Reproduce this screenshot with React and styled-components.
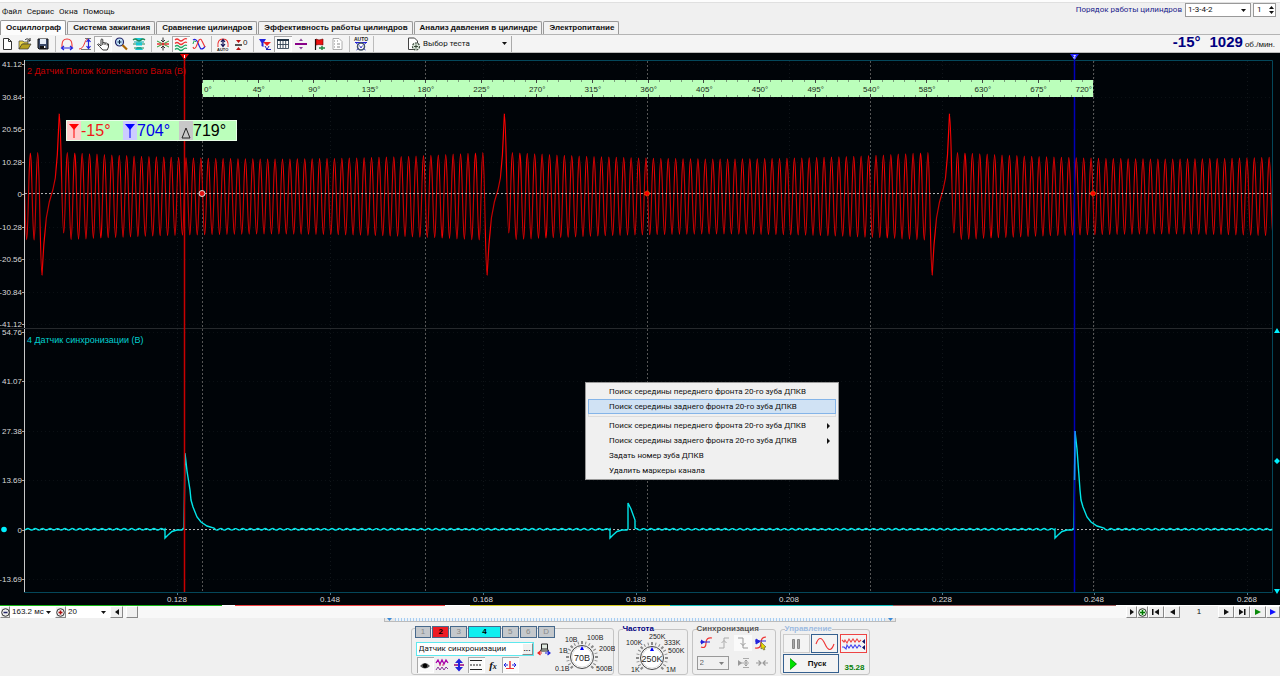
import React, { useState } from 'react';
import styled, { createGlobalStyle } from 'styled-components';

const tabs = [
    'Осциллограф',
    'Система зажигания',
    'Сравнение цилиндров',
    'Эффективность работы цилиндров',
    'Анализ давления в цилиндре',
    'Электропитание',
];

const menuItems = [
    { text: 'Поиск середины переднего фронта 20-го зуба ДПКВ' },
    { text: 'Поиск середины заднего фронта 20-го зуба ДПКВ', active: true, last: true },
    { text: 'Поиск середины переднего фронта 20-го зуба ДПКВ', sub: true },
    { text: 'Поиск середины заднего фронта 20-го зуба ДПКВ', sub: true },
    { text: 'Задать номер зуба ДПКВ' },
    { text: 'Удалить маркеры канала' },
];

const uiFont = "Roboto, 'Liberation Sans', sans-serif";

const GlobalStyle = createGlobalStyle`
* { box-sizing: border-box; }
body {
    margin: 0;
    background: #f0f0f0;
    color: #111;
    font-family: 'Liberation Sans', Arial, sans-serif;
    font-size: 8px;
    line-height: 10px;
}
button, input, select {
    font: inherit;
    color: inherit;
    margin: 0;
    padding: 0;
    border: 0;
    background: none;
    border-radius: 0;
}
svg { display: block; flex: none; }
`;

/* ---------- icons ---------- */

const Icon = ({ w = 16, h = 16, children }) => (
    <svg width={w} height={h} viewBox={`0 0 ${w} ${h}`} fill="none" aria-hidden="true">
        {children}
    </svg>
);

const ArrowDown = () => <Icon w={5} h={3}><path d="M0 0h5L2.5 3z" fill="#111" /></Icon>;
const ArrowTiny = () => <Icon w={5} h={3}><path d="M0 0h5L2.5 3z" fill="#3a8ad8" /></Icon>;

const toolGroups = [
    [
        { name: 'Новый', icon: <path d="M4.5 2.500h5l3 3v8h-8zM9.500 2.500v3h3" stroke="#333" fill="#fff" /> },
        { name: 'Открыть', icon: <>
            <path d="M2 13V5h4l1 1h4v2H6z" fill="#e8d44a" stroke="#444" strokeWidth=".7" />
            <path d="M2 13l3-5h9l-3 5z" fill="#b5a020" stroke="#333" strokeWidth=".7" />
            <path d="M8 4c2-2 4-1 5 1m0-3v3h-3" stroke="#222" />
        </> },
        { name: 'Сохранить', icon: <>
            <path d="M3 3h10v10H4l-1-1z" fill="#3a4a6a" stroke="#111" />
            <path d="M5 3h6v5H5z" fill="#e4ecf6" /><path d="M5 10h6v3H5z" fill="#111" /><path d="M9 10h1.5v2H9z" fill="#fff" />
        </> },
    ],
    [
        { name: 'Период', icon: <>
            <path d="M3 11V9q0-6 5-6t5 6v2" stroke="#e33" strokeWidth="1.1" />
            <path d="M3 12h10M5 10l-2.500 2L5 14M11 10l2.500 2L11 14" stroke="#22d" strokeWidth="1.2" />
        </> },
        { name: 'Амплитуда', icon: <>
            <path d="M2 13c6 0 5-10 9-10" stroke="#e33" /><path d="M4 13.500h10M8 2.500h6" stroke="#555" strokeWidth=".8" />
            <path d="M11.500 4v8M9.500 6l2-2.500 2 2.500M9.500 10l2 2.500 2-2.500" stroke="#22d" strokeWidth="1.2" />
        </> },
        { name: 'Рука', pressed: true, icon: <path d="M6 10V3.500q1-1.200 1.800 0V7l1.200-.6 1 .8 1.400-.4.8 1 1.300.2V11l-1.300 3H7.800L4.500 10.500 2.500 8.500q.5-1 1.600-.3zM7.800 7v2M10 7.200V9M12.200 8v1.500" fill="#fff" stroke="#222" strokeWidth=".9" /> },
        { name: 'Масштаб', icon: <>
            <circle cx="6.500" cy="6" r="4" fill="#bfe3fa" stroke="#226" strokeWidth="1.2" /><path d="M4.500 6h4M6.500 4v4" stroke="#124" />
            <path d="M9.500 9l4.500 4.500" stroke="#a60" strokeWidth="2.2" />
        </> },
        { name: 'Авто масштаб', icon: <>
            <path d="M4 2h8l-2 3H6zM4 14h8l-2-3H6z" fill="#16c8d4" /><path d="M5 6.500h6v3H5z" fill="#16c8d4" />
            <path d="M2 4q2-2 4 0t4 0 4 0M2 8h3m6 0h3M3 12h10" stroke="#285" strokeWidth="1.2" /><path d="M3 6h10" stroke="#0aa" />
        </> },
    ],
    [
        { name: 'Совместить', icon: <>
            <path d="M2 8h4m4 0h4" stroke="#e33" strokeWidth="1.5" /><path d="M2 5l6 3-6 3M14 5L8 8l6 3" stroke="#393" />
            <path d="M8 1.500v4M8 14.500v-4M6 4l2 2 2-2M6 12l2-2 2 2" stroke="#333" /><circle cx="8" cy="8" r="1.5" fill="#d33" />
        </> },
        { name: 'Раздельно', pressed: true, icon: <>
            <path d="M2 4q2-2 4 0t4 0 4-1M2 7.500q2-2 4 0t4 0 4-1" stroke="#e33" strokeWidth="1.2" />
            <path d="M2 10.500q2-2 4 0t4 0 4-1M2 13.500q2-2 4 0t4 0 4-1" stroke="#2a6" strokeWidth="1.2" />
        </> },
        { name: 'Наложить', icon: <>
            <path d="M2 4q3-2 5 3t3 6q3 0 4-3" stroke="#22d" strokeWidth="1.2" /><path d="M2 11q1 3 3 0l3-7q2-2 3 1l3 6" stroke="#e33" strokeWidth="1.1" /><path d="M2 8q1-5 3-2" stroke="#2a5" />
        </> },
    ],
    [
        { name: 'Авто', icon: <>
            <path d="M3 11q-1-8 5-8t5 8" stroke="#e33" strokeWidth="1.1" /><path d="M8 4v6M6 6l2-2.500L10 6M6 8l2 2.500L10 8" stroke="#115" strokeWidth="1.2" />
            <text x="2" y="15" fontSize="4" fontWeight="bold" fill="#222">AUTO</text>
        </> },
        { name: 'Ноль', icon: <>
            <path d="M2 9h7" stroke="#222" strokeWidth="1.5" /><path d="M3 4h5L5.500 7zM3 14h5l-2.500-3z" fill="#b11" />
            <text x="10" y="9" fontSize="8" fill="#222">0</text>
        </> },
    ],
    [
        { name: 'Фильтр', icon: <>
            <path d="M2 3h7L6.500 7v4L4.500 10V7z" fill="#22d" /><path d="M6 6h8l-4 4z" fill="#e22" /><path d="M8 10l2 3.500L12 10M9 13.500h5" stroke="#22b" />
        </> },
        { name: 'Таблица', pressed: true, icon: <>
            <path d="M2.500 3.500h11v9h-11zM5.300 5v7M8 5v7M10.700 5v7M2.500 8.500h11" stroke="#345" fill="#fff" strokeWidth=".9" /><path d="M2 3h12v2H2z" fill="#234" />
        </> },
        { name: 'Разделить', icon: <><path d="M2 8h12" stroke="#808" strokeWidth="2" /><path d="M6 5h4L8 2.500zM6 11h4l-2 2.500z" fill="#849" /></> },
        { name: 'Флаг', icon: <>
            <path d="M4.500 3v11" stroke="#111" strokeWidth="1.2" /><path d="M5 3l3 1 4-1v6l-4-.5L5 9z" fill="#e11" stroke="#600" strokeWidth=".6" /><path d="M8 12h6M11 10v4" stroke="#284" strokeWidth="1.5" />
        </> },
        { name: 'Отчёт', icon: <>
            <path d="M4 2.500h6l3 3v8H4z" fill="#fff" stroke="#999" strokeWidth=".8" /><path d="M5 5h1m-1 3h1m-1 3h1m2-3h3m-3 3h3m-3-6h1" stroke="#888" />
        </> },
    ],
    [
        { name: 'Автонастройка', icon: <>
            <text x="1" y="5" fontSize="5" fontWeight="bold" fill="#222">AUTO</text><path d="M2 6.500h12" stroke="#22d" />
            <circle cx="8" cy="10.500" r="3.500" stroke="#456" strokeWidth="1.5" fill="#fff" /><path d="M6.500 9.500L8 12l1.500-2.500M3 7l2 1.500M13 7l-2 1.500M3.500 14l2-1.500M12.500 14l-2-1.500" stroke="#22b" strokeWidth=".9" />
        </> },
    ],
];

/* ---------- scope geometry ---------- */

const REV = 445.1;
const peaks = [-385.8, 59.3, 504.4, 949.5];
const LEFT = 25;
const RIGHT = 1272;

// crank sensor, 58 teeth and a gap in each revolution
const crankPath = () => {
    const pts = [];
    peaks.forEach((p) => {
        pts.push([p, 114, 1]);
        for (let k = 1; k <= 57; k++) {
            const e = ((k - 29) / 28) ** 2;
            const x = p + 8 + (k - 1) * 7.42;
            pts.push([x - 3.6, k === 1 ? 233 : 234 + 6 * e]);
            pts.push([x, 159 - 6.5 * e]);
        }
        const t = p + REV;
        pts.push([t - 17.3, 275]);
        pts.push([t - 15.5, 245, 1], [t - 13, 218, 1], [t - 10, 202, 1], [t - 6.5, 190, 1], [t - 4, 178, 1], [t - 2, 155, 1]);
    });
    return pts.map(([x, y, line], i) => {
        if (i === 0) return `M${x} ${y}`;
        if (line) return `L${x} ${y}`;
        const [x0, y0] = pts[i - 1];
        const c = (x - x0) * 0.4;
        return `C${(x0 + c).toFixed(2)} ${y0} ${(x - c).toFixed(2)} ${y.toFixed(1)} ${x.toFixed(2)} ${y.toFixed(1)}`;
    }).join('');
};

const spike = (x, top) => [
    [x - 1, 529], [x, top], [x + 2, top + 18], [x + 5, 490], [x + 6, 500], [x + 8, 507],
    [x + 12, 517], [x + 16, 522], [x + 22, 526], [x + 29, 528],
];
const dip = (x) => [[x, 529], [x, 538], [x + 3, 535], [x + 7, 531.5], [x + 12, 530], [x + 17, 530]];

const syncPath = () => {
    const events = [
        dip(165), spike(185, 453),
        dip(610), [[628, 529], [628, 503], [631, 509], [635, 520], [635, 528]],
        dip(1055), spike(1075, 431),
    ];
    const pts = [];
    let x = LEFT;
    events.concat([[[RIGHT, 529]]]).forEach((ev) => {
        for (; x < ev[0][0]; x += 1) pts.push([x, 529.3 + 0.8 * Math.sin(x * 0.847)]);
        pts.push(...ev);
        x = ev[ev.length - 1][0] + 1;
    });
    return 'M' + pts.map(([a, b]) => `${a} ${b.toFixed(1)}`).join('L');
};

const topScale = ['41.12', '30.84', '20.56', '10.28', '0', '-10.28', '-20.56', '-30.84', '-41.12'];
const bottomScale = ['54.76', '41.07', '27.38', '13.69', '0', '-13.69'];
const times = ['0.128', '0.148', '0.168', '0.188', '0.208', '0.228', '0.248', '0.268'];
const range = (n) => Array.from({ length: n }, (_, i) => i);

const topY = (i) => Math.round(64 + i * 32.5);
const bottomY = (i) => Math.round(332 + i * 49.4);
const timeX = (i) => Math.round(177 + i * 152.9);

function Scale({ labels, at }) {
    return labels.map((t, i) => (
        <g key={t}>
            <text x="22" y={at(i) + 3} textAnchor="end" fill="#d8d8d8">{t}</text>
            <path d={`M22 ${at(i)}.5h3`} stroke="#aaa" />
            <path d={`M25 ${at(i)}.5H1272`} stroke="#0b1014" strokeDasharray="1 3" />
        </g>
    ));
}

function DegreeRuler() {
    return (
        <g fill="#1a2a1a">
            <rect x="202" y="80" width="891" height="17" fill="#bbffbb" />
            {range(81).map((i) => {
                const x = Math.round(202 + i * 11.14);
                const h = i % 5 === 0 ? 3 : 2;
                return <path key={i} d={`M${x}.5 80v${h}M${x}.5 97v-${h}`} stroke={i % 5 === 0 ? '#444' : '#7a9a7a'} />;
            })}
            <text x="204" y="92">0°</text>
            {range(15).map((i) => <text key={i} x={203 + (i + 1) * 55.7} y="92" textAnchor="middle">{(i + 1) * 45}°</text>)}
            <text x="1092" y="92" textAnchor="end">720°</text>
        </g>
    );
}

function Scope() {
    return (
        <ScopeSvg viewBox="0 53 1280 552" role="img" aria-label="Осциллограмма">
            <defs>
                <linearGradient id="crank" gradientUnits="userSpaceOnUse" x1="0" x2="0" y1="110" y2="276">
                    <stop offset="0" stopColor="#f00" />
                    <stop offset=".34" stopColor="#f00" />
                    <stop offset=".45" stopColor="#c40000" />
                    <stop offset=".65" stopColor="#c40000" />
                    <stop offset=".75" stopColor="#f00" />
                    <stop offset="1" stopColor="#e00000" />
                </linearGradient>
                <clipPath id="plot"><rect x={LEFT} y="60" width={RIGHT - LEFT} height="532" /></clipPath>
            </defs>
            <rect y="53" width="1280" height="552" fill="#000408" />

            <Scale labels={topScale} at={topY} />
            <Scale labels={bottomScale} at={bottomY} />
            {times.map((t, i) => (
                <g key={t}>
                    <path d={`M${timeX(i)}.5 61V592`} stroke="#11161a" strokeDasharray="1 3" />
                    <text x={timeX(i)} y="602" textAnchor="middle" fill="#d8d8d8">{t}</text>
                    <path d={`M${timeX(i)}.5 592v3`} stroke="#578" />
                </g>
            ))}

            <path d="M24 60.500H1272.500V592.500H24" fill="none" stroke="#04475a" />
            <path d="M24.500 60V592" stroke="#c8c8c8" />
            <path d="M0 328.500H1272" stroke="#26292c" />
            {range(5).map((i) => <path key={i} d={`M${Math.round(202 + i * 222.7)}.5 61V592`} stroke="#555" strokeDasharray="2 2" />)}

            <g clipPath="url(#plot)" fill="none">
                <path d={crankPath()} stroke="url(#crank)" strokeWidth="1.2" />
            </g>
            <path d="M25 193.500H1272M25 529.500H1272" stroke="#ddd" strokeDasharray="2 2" opacity=".8" />
            <path d={syncPath()} stroke="#00e5e8" strokeWidth="1.4" fill="none" />

            <path d="M184.500 58V592" stroke="#c80000" strokeWidth="1.5" />
            <path d="M180 54h9l-4.500 6z" fill="#e00000" /><path d="M184.500 55v3" stroke="#fff" />
            <path d="M1074.500 58V592" stroke="#0000b8" strokeWidth="1.5" />
            <path d="M1070 54h9l-4.500 6z" fill="#2020ff" /><path d="M1073.500 55.500h2l-2 2.500h2" stroke="#fff" strokeWidth=".8" fill="none" />
            <path d="M1074.500 480L1075 431" stroke="#1a8cff" strokeWidth="1.5" />
            <DegreeRuler />

            <circle cx="202" cy="193.500" r="3" fill="#e01010" stroke="#ddd" />
            {[647, 1093].map((x) => <circle key={x} cx={x} cy="193.500" r="2.5" fill="#f00" stroke="#c80" strokeDasharray="1 1" />)}

            <text x="27" y="74" fontSize="9" fill="#c40000">2 Датчик Полож Коленчатого Вала (В)</text>
            <text x="27" y="343" fontSize="9" fill="#00d0d0">4 Датчик синхронизации (В)</text>

            <g fill="#00f0ff">
                <circle cx="4" cy="529.500" r="2.8" />
                <path d="M1274 333h6l-3-5zM1274 589h6l-3 5zM1277 458l3 3-3 3-3-3z" />
            </g>
        </ScopeSvg>
    );
}

/* ---------- dials ---------- */

function Dial({ w, cx, value, labels }) {
    return (
        <DialSvg width={w} height="41" viewBox={`0 1 ${w} 41`} role="img" aria-label={value}>
            {range(19).map((i) => (
                <path key={i} d={`M${cx} 10v3`} stroke="#888" strokeWidth={i % 3 ? 1 : 2} transform={`rotate(${-135 + i * 15} ${cx} 26)`} />
            ))}
            <circle cx={cx} cy="26" r="11.5" fill="#fafafa" stroke="#444" />
            <circle cx={cx} cy="26" r="10" fill="#fff" stroke="#ccc" strokeWidth=".6" />
            <path d={`M${cx - 2} 19h4l-2-4z`} fill="#00f" />
            <text x={cx} y="30" textAnchor="middle" fontSize="9">{value}</text>
            {labels.map(([t, x, y]) => <text key={t} x={x} y={y} fontSize="7">{t}</text>)}
        </DialSvg>
    );
}

const channels = ['1', '2', '3', '4', '5', '6', 'D'];

export default function App() {
    const [tab, setTab] = useState(0);
    const [channel, setChannel] = useState('Датчик синхронизации');

    return (
        <Page>
            <GlobalStyle />
            <TitleStrip />
            <MenuRow>
                <nav>
                    {['Файл', 'Сервис', 'Окна', 'Помощь'].map((m) => <button key={m}>{m}</button>)}
                </nav>
                <OrderBox>
                    <label htmlFor="order">Порядок работы цилиндров</label>
                    <SelectBox $w={66} $border>
                        <select id="order"><option>1-3-4-2</option><option>1-2-4-3</option></select>
                        <ArrowDown />
                    </SelectBox>
                    <Spin>
                        <input type="number" aria-label="Цилиндр" defaultValue="1" />
                        <Icon w={5} h={10}><path d="M0 4h5L2.5 1zM0 6h5L2.5 9z" fill="#111" /></Icon>
                    </Spin>
                </OrderBox>
            </MenuRow>

            <Tabs role="tablist">
                {tabs.map((t, i) => (
                    <Tab key={t} role="tab" aria-selected={i === tab} $active={i === tab} onClick={() => setTab(i)}>{t}</Tab>
                ))}
            </Tabs>

            <Toolbar>
                {toolGroups.map((group, i) => (
                    <ToolGroup key={i}>
                        {group.map((b) => (
                            <ToolButton key={b.name} aria-label={b.name} $pressed={b.pressed}><Icon>{b.icon}</Icon></ToolButton>
                        ))}
                    </ToolGroup>
                ))}
                <TestButton>
                    <Icon w={14} h={14}>
                        <path d="M1.500 1h6l3 3v8.500h-9z" fill="#fff" stroke="#444" />
                        <circle cx="9" cy="9.500" r="3.5" fill="#dfeadf" stroke="#374737" strokeWidth="1.2" strokeDasharray="2 1" /><path d="M7 9.500h4M9 7.500v4" stroke="#374737" />
                    </Icon>
                    <span>Выбор теста</span>
                    <ArrowDown />
                </TestButton>
                <Rpm><b>-15°</b><b>1029</b><span>об./мин.</span></Rpm>
            </Toolbar>

            <ScopeBox>
                <Scope />
                <Readout>
                    <ReadIcon $bg="#ffcccc"><Icon w={14} h={18}><path d="M2 2h10L7 8z" fill="#f00" /><path d="M7 7v9" stroke="#f00" /></Icon></ReadIcon>
                    <ReadValue $color="#f01818">-15°</ReadValue>
                    <ReadIcon $bg="#ccccff"><Icon w={14} h={18}><path d="M2 2h10L7 8z" fill="#00f" /><path d="M7 7v9" stroke="#00f" /></Icon></ReadIcon>
                    <ReadValue $color="#0000e8">704°</ReadValue>
                    <ReadIcon $bg="#c8c8c8"><Icon w={14} h={18}><path d="M3 16L7 6l4 10z" stroke="#222" /></Icon></ReadIcon>
                    <ReadValue $color="#000">719°</ReadValue>
                </Readout>
                <ContextMenu role="menu">
                    {menuItems.map((m, i) => (
                        <ContextItem key={i} role="menuitem" $active={m.active} $last={m.last}>
                            {m.text}
                            {m.sub && <Icon w={3} h={6}><path d="M0 0v6l3-3z" fill="#111" /></Icon>}
                        </ContextItem>
                    ))}
                </ContextMenu>
            </ScopeBox>

            <ChannelLine>
                <Stretch $color="#14b414" $w={222} /><Stretch $color="#fff" $w={13} /><Stretch $color="#f04040" $w={210} /><Stretch $color="#fff" $w={25} />
                <Stretch $color="#d8cc20" $w={200} /><Stretch $color="#10c0c0" $w={223} /><Stretch $color="#a06060" $w={223} /><Stretch $color="#fff" $w={164} />
            </ChannelLine>
            <ScrollRow>
                <FlatButton $w={10} aria-label="Уменьшить"><Icon w={9} h={9}><circle cx="4.500" cy="4.500" r="3.800" stroke="#333" /><path d="M2.500 4.500h4" stroke="#226" strokeWidth="1.5" /></Icon></FlatButton>
                <SelectBox $w={45}><select aria-label="Развёртка"><option>163.2 мс</option></select><ArrowDown /></SelectBox>
                <FlatButton $w={11} aria-label="Увеличить"><Icon w={9} h={9}><circle cx="4.500" cy="4.500" r="3.800" stroke="#333" /><path d="M2.500 4.500h4M4.500 2.500v4" stroke="#a11" strokeWidth="1.5" /></Icon></FlatButton>
                <SelectBox $w={44}><select aria-label="Шаг"><option>20</option></select><ArrowDown /></SelectBox>
                <FlatButton $w={13} aria-label="Влево"><Icon w={4} h={6}><path d="M4 0v6L0 3z" fill="#111" /></Icon></FlatButton>
                <Track><Thumb aria-label="Ползунок" /></Track>
                <FlatButton $w={11} aria-label="Вправо"><Icon w={4} h={6}><path d="M0 0v6l4-3z" fill="#111" /></Icon></FlatButton>
                <FlatButton $w={11} aria-label="Добавить кадр"><Icon w={9} h={9}><circle cx="4.500" cy="4.500" r="3.800" stroke="#333" fill="#dfd" /><path d="M2 4.500h5M4.500 2v5" stroke="#070" strokeWidth="1.5" /></Icon></FlatButton>
                <FlatButton $w={16} aria-label="В начало"><Icon w={8} h={6}><path d="M0 0h1.500v6H0zM7 0v6L2.500 3z" fill="#111" /></Icon></FlatButton>
                <FlatButton $w={16} aria-label="Назад"><Icon w={5} h={6}><path d="M5 0v6L0 3z" fill="#111" /></Icon></FlatButton>
                <Frame>1</Frame>
                <FlatButton $w={16} aria-label="Вперёд"><Icon w={5} h={6}><path d="M0 0v6l5-3z" fill="#111" /></Icon></FlatButton>
                <FlatButton $w={16} aria-label="В конец"><Icon w={8} h={6}><path d="M1 0v6l4.500-3zM6 0h1.500v6H6z" fill="#111" /></Icon></FlatButton>
                <FlatButton $w={16} aria-label="Воспроизвести"><Icon w={6} h={6}><path d="M0 0v6l6-3z" fill="#0a8a0a" /></Icon></FlatButton>
                <FlatButton $w={14} aria-label="Далее"><Icon w={6} h={6}><path d="M0 0v6l6-3z" fill="#11f" /></Icon></FlatButton>
            </ScrollRow>
            <Splitter><ArrowTiny /><Dots /><ArrowTiny /></Splitter>

            <Bottom>
                <ChannelGroup>
                    <ChannelLeft>
                        <Channels>
                            {channels.map((c) => <ChannelButton key={c} $c={c}>{c}</ChannelButton>)}
                        </Channels>
                        <NameRow>
                            <NameField>
                                <input aria-label="Канал" value={channel} onChange={(e) => setChannel(e.target.value)} />
                                <button aria-label="Выбрать">...</button>
                            </NameField>
                            <Icon w={14} h={13}>
                                <path d="M4.500 1h6v5h-6zM4.500 6l-1 2h8l-1-2" stroke="#222" fill="#dfe8df" />
                                <path d="M3.500 8L1 10l2.500 2M1 10h4" stroke="#e22" strokeWidth="1.2" /><path d="M10.500 8l2.500 2-2.500 2M13 10H8" stroke="#22d" strokeWidth="1.2" />
                            </Icon>
                        </NameRow>
                        <IconRow>
                            <ToolButton aria-label="Показать" $pressed><Icon><path d="M3 9q5-6 10 0-5 5-10 0z" fill="#555" /><circle cx="8" cy="8.800" r="2.2" fill="#000" /></Icon></ToolButton>
                            <ToolButton aria-label="Инверсия"><Icon><path d="M2 6l2-3 2 4 2-4 2 4 2-4 2 3" stroke="#a0a" strokeWidth="1.3" /><path d="M2 13l2-3 2 3 2-3 2 3 2-3 2 2" stroke="#839" /><path d="M5 8h6" stroke="#c36" strokeDasharray="2 1" /></Icon></ToolButton>
                            <ToolButton aria-label="Смещение"><Icon><path d="M8 1.500l4 4.500H4zM8 14.500l4-4.500H4z" fill="#22d" /><path d="M3 8h10" stroke="#907" strokeWidth="1.5" /><path d="M8 5v6" stroke="#22d" strokeWidth="2" /></Icon></ToolButton>
                            <ToolButton aria-label="Линии" $pressed><Icon><path d="M2 3.500h12M2 12.500h12" stroke="#222" /><path d="M2 8h12" stroke="#222" strokeDasharray="2 1" /></Icon></ToolButton>
                            <ToolButton aria-label="Формула"><em>f<small>x</small></em></ToolButton>
                            <ToolButton aria-label="Порог" $pressed><Icon><path d="M2 8h4M4 6L2 8l2 2M14 8h-4M12 6l2 2-2 2" stroke="#22d" /><path d="M4 11.500h4V4v7.500h4" stroke="#e33" /></Icon></ToolButton>
                        </IconRow>
                    </ChannelLeft>
                    <Dial w={60} cx={27} value="70В" labels={[['0.1В', 0, 40], ['1В', 4, 22], ['10В', 10, 11], ['100В', 32, 9], ['200В', 44, 20], ['500В', 41, 40]]} />
                </ChannelGroup>

                <Group $w={70}>
                    <legend>Частота</legend>
                    <Dial w={64} cx={31} value="250K" labels={[['1K', 10, 40], ['100K', 5, 13], ['250K', 28, 7], ['333K', 43, 13], ['500K', 47, 21], ['1M', 45, 40]]} />
                </Group>

                <Group $w={84} $color="#555">
                    <legend>Синхронизация</legend>
                    <SyncGrid>
                        <ToolButton aria-label="Порог синхронизации"><Icon><path d="M3 12q5 2 5-4t6-5" stroke="#e33" strokeWidth="1.2" /><path d="M2 7h10" stroke="#22d" /><path d="M3 4.500v5L7 7z" fill="#22d" /></Icon></ToolButton>
                        <ToolButton aria-label="Фронт"><Icon><path d="M3 13h5V3h5M5.500 8L8 5.500 10.500 8" stroke="#aaa" /></Icon></ToolButton>
                        <ToolButton aria-label="Спад" $light><Icon><path d="M3 3h5v10h5M5.500 8L8 10.500 10.500 8" stroke="#999" /></Icon></ToolButton>
                        <ToolButton aria-label="Авто"><Icon><path d="M2 13q6 1 6-5t5-6" stroke="#e33" strokeWidth="1.2" /><path d="M2 6h11M3 4v5l4-2.500z" stroke="#22d" fill="#22d" /><path d="M8 7l5 5-2 .5 1 2-1.500.5-1-2L8 14z" fill="#e8d800" stroke="#553" strokeWidth=".6" /></Icon></ToolButton>
                    </SyncGrid>
                    <SyncGrid>
                        <SelectBox $w={32} $border $dim><select aria-label="Канал синхронизации"><option>2</option></select><ArrowDown /></SelectBox>
                        <SyncPair>
                            <ToolButton aria-label="Смещение"><Icon><path d="M7 3.500h6M7 12.500h6M3 8h10" stroke="#aaa" strokeWidth="1.2" /><path d="M2 5v6l4-3z" fill="#999" /><path d="M10 5v6M8.500 6.500L10 5l1.500 1.500M8.500 9.500L10 11l1.500-1.500" stroke="#999" /></Icon></ToolButton>
                            <ToolButton aria-label="Сжать"><Icon><path d="M2 8h5M14 8H9M4.500 5.500L7 8l-2.500 2.500M11.500 5.500L9 8l2.500 2.500" stroke="#999" strokeWidth="1.2" /></Icon></ToolButton>
                        </SyncPair>
                    </SyncGrid>
                </Group>

                <Group $w={90} $color="#9dbbe0">
                    <legend>Управление</legend>
                    <ControlRow>
                        <ControlButton aria-label="Пауза" $border="#ccc"><Icon w={10} h={12}><path d="M1.500 1.500h2v9h-2zM6.500 1.500h2v9h-2z" fill="#aaa" stroke="#888" /></Icon></ControlButton>
                        <ControlButton aria-label="Синус" $border="#35608f"><Icon w={20} h={14}><path d="M1 7Q5-4 10 7T19 7" stroke="#e33" strokeWidth="1.1" /></Icon></ControlButton>
                        <ControlButton aria-label="Поток" $border="#e44"><Icon w={25} h={14}>
                            <path d="M1 3l2 2 1-2 2 3 2-4 2 3 2-3 2 3 2-3 2 3 2-2" stroke="#e44" strokeWidth="1.1" /><path d="M1 10h2l2 2 1-4 2 3 2-3 2 3 2-3 2 3 2-3 2 2" stroke="#44e" strokeWidth="1.1" />
                            <path d="M24 2v5l-3-2.500zM24 8v5l-3-2.500z" fill="#116" />
                        </Icon></ControlButton>
                    </ControlRow>
                    <ControlRow>
                        <StartButton><Icon w={7} h={12}><path d="M0 0v12l7-6z" fill="#0a8a0a" /><path d="M0 1v10l6-5z" fill="#00e000" /></Icon><span>Пуск</span></StartButton>
                        <Elapsed>35.28</Elapsed>
                    </ControlRow>
                </Group>
            </Bottom>
        </Page>
    );
}

/* ---------- styles ---------- */

const Page = styled.div`
display: flex;
flex-direction: column;
min-height: 100vh;
`;

const TitleStrip = styled.div`
height: 3px;
background: #fdfdfd;
border-bottom: 1px solid #e0e0e0;
`;

const MenuRow = styled.div`
display: flex;
justify-content: space-between;
align-items: flex-start;
height: 17px;
font-family: ${uiFont};
nav {
    display: flex;
    gap: 5px;
    padding: 4px 2px;
}
`;

const OrderBox = styled.div`
display: flex;
align-items: center;
gap: 2px;
padding-right: 4px;
label {
    color: #1c1c8c;
    padding-right: 1px;
}
`;

const SelectBox = styled.div`
display: grid;
align-items: center;
width: ${(p) => p.$w}px;
height: ${(p) => (p.$border ? 14 : 12)}px;
background: ${(p) => (p.$dim ? '#f0f0f0' : '#fff')};
border: ${(p) => (p.$border ? '1px solid #999' : '0')};
color: ${(p) => (p.$dim ? '#666' : '#111')};
select {
    grid-area: 1 / 1;
    appearance: none;
    width: 100%;
    height: 100%;
    padding-left: 2px;
    line-height: 10px;
    outline: 0;
}
svg {
    grid-area: 1 / 1;
    justify-self: end;
    margin-right: 4px;
    pointer-events: none;
    opacity: ${(p) => (p.$dim ? 0.5 : 1)};
}
`;

const Spin = styled.div`
display: flex;
align-items: center;
width: 23px;
height: 14px;
padding: 0 3px;
background: #fff;
border: 1px solid #999;
input {
    width: 12px;
    flex: 1;
    appearance: textfield;
    outline: 0;
}
input::-webkit-inner-spin-button {
    appearance: none;
}
`;

const Tabs = styled.div`
display: flex;
align-items: flex-end;
gap: 1px;
height: 15px;
border-bottom: 1px solid #b4b4b4;
`;

const Tab = styled.button`
height: ${(p) => (p.$active ? 15 : 13)}px;
margin-bottom: ${(p) => (p.$active ? -1 : 0)}px;
padding: 0 4px 0 5px;
font-weight: bold;
line-height: 12px;
white-space: nowrap;
background: ${(p) => (p.$active ? '#fcfcfc' : '#f2f2f2')};
border: 1px solid #999;
border-bottom: 0;
border-radius: 2px 2px 0 0;
`;

const Toolbar = styled.div`
display: flex;
align-items: center;
height: 18px;
background: #f4f4f4;
border-bottom: 1px solid #bbb;
`;

const ToolGroup = styled.div`
display: flex;
margin-right: 2px;
padding-right: 3px;
border-right: 1px solid #bbb;
&:first-child {
    margin-left: -2px;
}
`;

const ToolButton = styled.button`
display: flex;
align-items: center;
justify-content: center;
width: 18px;
height: 16px;
overflow: hidden;
background: ${(p) => (p.$pressed || p.$light ? '#fafafa' : 'none')};
box-shadow: ${(p) => (p.$pressed ? 'inset 1px 1px 0 #aaa, inset -1px -1px 0 #fff' : 'none')};
em {
    font: italic bold 11px 'Liberation Serif', serif;
}
small {
    font-size: 8px;
}
`;

const TestButton = styled.button`
display: flex;
align-items: center;
gap: 2px;
width: 105px;
height: 16px;
margin-left: 31px;
padding-right: 4px;
border-right: 1px solid #aaa;
font-family: ${uiFont};
span {
    flex: 1;
    text-align: left;
}
`;

const Rpm = styled.div`
display: flex;
align-items: baseline;
gap: 2px;
margin-left: auto;
padding-right: 5px;
line-height: 16px;
b {
    color: #000080;
    font-size: 15px;
}
b + b {
    margin-left: 7px;
}
`;

const ScopeBox = styled.main`
position: relative;
background: #000408;
`;

const ScopeSvg = styled.svg`
width: 100%;
height: auto;
font-size: 8px;
`;

const Readout = styled.div`
position: absolute;
left: 66px;
top: 67px;
display: flex;
align-items: stretch;
width: 171px;
height: 21px;
background: #bbffbb;
border: 1px solid #e8ffe8;
`;

const ReadIcon = styled.span`
display: flex;
align-items: center;
width: 14px;
background: ${(p) => p.$bg};
`;

const ReadValue = styled.span`
width: 42px;
color: ${(p) => p.$color};
font-size: 16px;
line-height: 19px;
`;

const ContextMenu = styled.div`
position: absolute;
left: 585px;
top: 329px;
width: 254px;
padding: 1px 2px;
background: #f0f0f0;
border: 1px solid #999;
font-family: ${uiFont};
`;

const ContextItem = styled.button`
display: flex;
align-items: center;
justify-content: space-between;
width: 100%;
height: 15px;
padding: 0 5px 0 20px;
white-space: nowrap;
background: ${(p) => (p.$active ? '#d0e2f4' : 'none')};
border: 1px solid ${(p) => (p.$active ? '#84b4e8' : 'transparent')};
margin-bottom: ${(p) => (p.$last ? 4 : 0)}px;
box-shadow: ${(p) => (p.$last ? '0 3px 0 -1px #f0f0f0, 0 3px 0 0 #dcdcdc' : 'none')};
`;

const ChannelLine = styled.div`
display: flex;
height: 1px;
`;

const Stretch = styled.span`
flex: ${(p) => p.$w} 1 0;
background: ${(p) => p.$color};
`;

const ScrollRow = styled.div`
display: flex;
height: 12px;
background: #f0f0f0;
`;

const FlatButton = styled.button`
display: flex;
align-items: center;
justify-content: center;
width: ${(p) => p.$w}px;
height: 12px;
border: 1px solid;
border-color: #fff #888 #888 #fff;
`;

const Track = styled.div`
display: flex;
flex: 1;
padding-left: 3px;
background: #f8f8f8;
`;

const Thumb = styled.button`
width: 12px;
height: 12px;
background: #f0f0f0;
border: 1px solid;
border-color: #fff #888 #888 #fff;
`;

const Frame = styled.span`
width: 38px;
text-align: center;
line-height: 12px;
`;

const Splitter = styled.div`
display: flex;
align-items: center;
align-self: center;
gap: 3px;
width: 512px;
height: 4px;
padding: 0 2px;
border: 1px solid #bbb;
border-width: 0 1px 1px;
background: #e8e8e8;
`;

const Dots = styled.span`
flex: 1;
height: 3px;
background: repeating-linear-gradient(90deg, #a8cdf0 0 1px, #eef4fa 1px 3px);
`;

const Bottom = styled.footer`
display: flex;
justify-content: center;
gap: 4px;
flex: 1;
padding: 3px 0 1px;
`;

const ChannelGroup = styled.section`
display: flex;
width: 203px;
margin-top: 3px;
padding: 0 1px 0 3px;
border: 1px solid #c4c4c4;
border-radius: 3px;
`;

const ChannelLeft = styled.div`
display: flex;
flex-direction: column;
width: 140px;
margin-top: -3px;
`;

const Channels = styled.div`
display: flex;
gap: 1px;
`;

const channelColors = { 2: '#ee1c24', 4: '#10eef0' };

const ChannelButton = styled.button`
width: ${(p) => (p.$c === '4' ? 33 : 17)}px;
height: 12px;
font-weight: ${(p) => (channelColors[p.$c] ? 'bold' : 'normal')};
line-height: 10px;
color: ${(p) => (channelColors[p.$c] ? '#000' : '#888')};
background: ${(p) => channelColors[p.$c] || '#c4c8cc'};
border: 1px solid #47698c;
`;

const NameRow = styled.div`
display: flex;
align-items: center;
gap: 3px;
margin-top: 4px;
`;

const NameField = styled.div`
display: flex;
width: 118px;
height: 14px;
margin-left: 1px;
background: #fff;
border: 1px solid #5ee8ee;
font-family: ${uiFont};
input {
    flex: 1;
    min-width: 0;
    padding-left: 2px;
    outline: 0;
}
button {
    width: 11px;
    line-height: 6px;
    font-weight: bold;
    background: #f0f0f0;
    border: 1px solid;
    border-color: #fff #888 #888 #fff;
}
`;

const IconRow = styled.div`
display: flex;
width: 102px;
margin-top: 1px;
margin-left: 2px;
button {
    width: 17px;
}
`;

const DialSvg = styled.svg`
font-size: 8px;
margin-top: 3px;
text {
    fill: #222;
}
`;

const Group = styled.fieldset`
width: ${(p) => p.$w}px;
min-width: 0;
margin: 0;
padding: 0 2px;
border: 1px solid #c4c4c4;
border-radius: 3px;
legend {
    margin-left: 2px;
    padding: 0;
    font-weight: bold;
    line-height: 8px;
    color: ${(p) => p.$color || '#000080'};
}
svg {
    margin-top: 0;
}
`;

const SyncGrid = styled.div`
display: flex;
justify-content: space-between;
align-items: center;
height: 20px;
padding: 0 2px;
`;

const SyncPair = styled.div`
display: flex;
`;

const ControlRow = styled.div`
display: flex;
justify-content: space-between;
margin-top: 1px;
`;

const ControlButton = styled.button`
display: flex;
align-items: center;
justify-content: center;
width: 27px;
height: 19px;
background: #f4f4f4;
border: 1px solid ${(p) => p.$border};
`;

const StartButton = styled.button`
display: flex;
align-items: center;
width: 56px;
height: 19px;
padding-left: 6px;
font-weight: bold;
background: #f4f4f4;
border: 1px solid #35608f;
span {
    flex: 1;
    text-align: center;
}
`;

const Elapsed = styled.output`
align-self: flex-end;
padding-right: 2px;
color: #078007;
font-weight: bold;
`;
